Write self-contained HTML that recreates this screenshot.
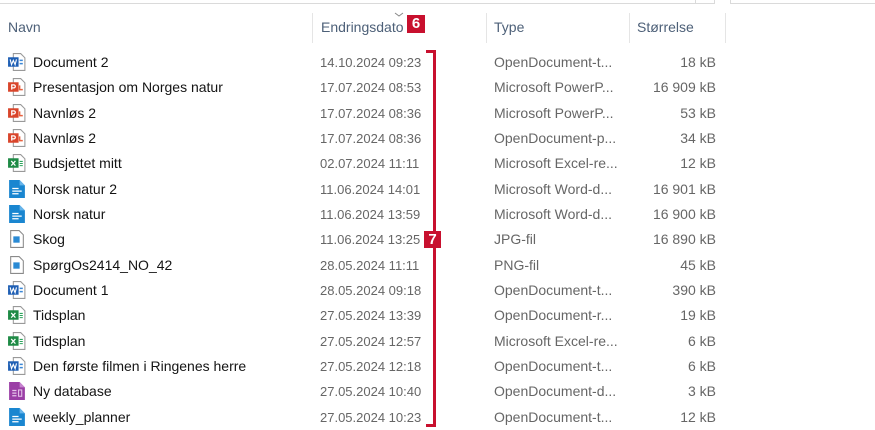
<!DOCTYPE html>
<html><head><meta charset="utf-8"><style>
*{margin:0;padding:0;box-sizing:border-box}
body{width:875px;height:428px;background:#fff;position:relative;overflow:hidden;font-family:"Liberation Sans",sans-serif;font-size:14px}
.a{position:absolute}
.hd{color:#4d6078;top:19px;font-size:14px}
.sep{position:absolute;top:13px;width:1px;height:30px;background:#e5e5e5}
.row{position:absolute;left:0;width:730px;height:25px}
.row span{position:absolute;top:4px;white-space:nowrap}
.n{left:33px;color:#141414}
.d{left:320px;color:#666;font-size:13px;top:5px!important}
.t{left:494px;color:#666}
.s{right:14px;color:#666}
.row svg{position:absolute;left:8px;top:2px}
.bd{position:absolute;background:#c8102e;color:#fff;font-weight:bold;font-size:15px;text-align:center;line-height:18px}
</style></head><body>
<div class="a" style="left:0;top:3px;width:715px;height:1px;background:#dadada"></div>
<div class="a" style="left:695px;top:0;width:1px;height:4px;background:#dadada"></div>
<div class="a" style="left:714px;top:0;width:1px;height:4px;background:#dadada"></div>
<div class="a" style="left:730px;top:0;width:1px;height:4px;background:#dadada"></div>
<div class="a" style="left:730px;top:3px;width:145px;height:1px;background:#dadada"></div>

<div class="a hd" style="left:8px">Navn</div>
<div class="sep" style="left:312px"></div>
<div class="a hd" style="left:321px">Endringsdato</div>
<svg class="a" style="left:394px;top:12px" width="10" height="6"><path d="M1 1 L5 4 L9 1" fill="none" stroke="#888" stroke-width="1"/></svg>
<div class="bd" style="left:407px;top:15px;width:18px;height:18px">6</div>
<div class="sep" style="left:486px"></div>
<div class="a hd" style="left:494px">Type</div>
<div class="sep" style="left:629px"></div>
<div class="a hd" style="left:637px">Størrelse</div>
<div class="sep" style="left:725px"></div>

<div class="a" style="left:426px;top:50px;width:10px;height:3px;background:#c8102e"></div>
<div class="a" style="left:433px;top:50px;width:3px;height:377px;background:#c8102e"></div>
<div class="a" style="left:426px;top:424px;width:10px;height:3px;background:#c8102e"></div>
<div class="bd" style="left:424px;top:231px;width:17px;height:17px">7</div>

<svg width="0" height="0" style="position:absolute">
<defs>
<symbol id="w" viewBox="0 0 17 19"><path d="M5 1.5h7l4 4v12H5z" fill="#fff" stroke="#999"/><rect x="0" y="5" width="10" height="9" fill="#1f5fb4"/><path d="M2 7l1.3 5 1.7-4 1.7 4L8 7" fill="none" stroke="#fff" stroke-width="1.1"/><path d="M11 8h3M11 11h3" stroke="#3b87d6" stroke-width="1.4"/></symbol>
<symbol id="p" viewBox="0 0 17 19"><path d="M5 1.5h7l4 4v12H5z" fill="#fff" stroke="#999"/><rect x="0" y="5" width="10" height="9" fill="#d9452b"/><path d="M3.5 12V7.5h2a1.4 1.4 0 0 1 0 2.8h-2" fill="none" stroke="#fff" stroke-width="1.2"/><path d="M11 8v4h3" fill="none" stroke="#e8613f" stroke-width="1.4"/></symbol>
<symbol id="x" viewBox="0 0 17 19"><path d="M5 1.5h7l4 4v12H5z" fill="#fff" stroke="#999"/><rect x="0" y="5" width="10" height="9" fill="#1e8a45"/><path d="M3 7.5l4 4.5M7 7.5l-4 4.5" stroke="#fff" stroke-width="1.2"/><path d="M11 8h3M11 10h3M11 12h3" stroke="#2aa35a" stroke-width="1"/></symbol>
<symbol id="b" viewBox="0 0 17 19"><path d="M1 1h10l5 5v12H1z" fill="#1a86d0"/><path d="M11 1v5h5" fill="#66b4ea"/><path d="M4 9h6M4 11.5h9M4 14h6" stroke="#fff" stroke-width="1.2"/></symbol>
<symbol id="i" viewBox="0 0 17 19"><path d="M2.5 1.5h8l4 4v12h-12z" fill="#fff" stroke="#8a8a8a"/><rect x="5" y="7" width="6" height="6" fill="#2a8ad4"/></symbol>
<symbol id="d" viewBox="0 0 17 19"><path d="M1 1h10l5 5v12H1z" fill="#9b3fa6"/><path d="M11 1v5h5" fill="#c783cf"/><path d="M4 9h4M4 11.5h4M4 14h4" stroke="#e6c5ea" stroke-width="1.2"/><rect x="10" y="8.5" width="3" height="6" fill="none" stroke="#e6c5ea"/></symbol>
</defs></svg>

<div class="row" style="top:50px"><svg width="18" height="20"><use href="#w"/></svg><span class="n">Document 2</span><span class="d">14.10.2024 09:23</span><span class="t">OpenDocument-t...</span><span class="s">18 kB</span></div>
<div class="row" style="top:75.3px"><svg width="18" height="20"><use href="#p"/></svg><span class="n">Presentasjon om Norges natur</span><span class="d">17.07.2024 08:53</span><span class="t">Microsoft PowerP...</span><span class="s">16 909 kB</span></div>
<div class="row" style="top:100.7px"><svg width="18" height="20"><use href="#p"/></svg><span class="n">Navnløs 2</span><span class="d">17.07.2024 08:36</span><span class="t">Microsoft PowerP...</span><span class="s">53 kB</span></div>
<div class="row" style="top:126px"><svg width="18" height="20"><use href="#p"/></svg><span class="n">Navnløs 2</span><span class="d">17.07.2024 08:36</span><span class="t">OpenDocument-p...</span><span class="s">34 kB</span></div>
<div class="row" style="top:151.3px"><svg width="18" height="20"><use href="#x"/></svg><span class="n">Budsjettet mitt</span><span class="d">02.07.2024 11:11</span><span class="t">Microsoft Excel-re...</span><span class="s">12 kB</span></div>
<div class="row" style="top:176.7px"><svg width="18" height="20"><use href="#b"/></svg><span class="n">Norsk natur 2</span><span class="d">11.06.2024 14:01</span><span class="t">Microsoft Word-d...</span><span class="s">16 901 kB</span></div>
<div class="row" style="top:202px"><svg width="18" height="20"><use href="#b"/></svg><span class="n">Norsk natur</span><span class="d">11.06.2024 13:59</span><span class="t">Microsoft Word-d...</span><span class="s">16 900 kB</span></div>
<div class="row" style="top:227.3px"><svg width="18" height="20"><use href="#i"/></svg><span class="n">Skog</span><span class="d">11.06.2024 13:25</span><span class="t">JPG-fil</span><span class="s">16 890 kB</span></div>
<div class="row" style="top:252.7px"><svg width="18" height="20"><use href="#i"/></svg><span class="n">SpørgOs2414_NO_42</span><span class="d">28.05.2024 11:11</span><span class="t">PNG-fil</span><span class="s">45 kB</span></div>
<div class="row" style="top:278px"><svg width="18" height="20"><use href="#w"/></svg><span class="n">Document 1</span><span class="d">28.05.2024 09:18</span><span class="t">OpenDocument-t...</span><span class="s">390 kB</span></div>
<div class="row" style="top:303.3px"><svg width="18" height="20"><use href="#x"/></svg><span class="n">Tidsplan</span><span class="d">27.05.2024 13:39</span><span class="t">OpenDocument-r...</span><span class="s">19 kB</span></div>
<div class="row" style="top:328.7px"><svg width="18" height="20"><use href="#x"/></svg><span class="n">Tidsplan</span><span class="d">27.05.2024 12:57</span><span class="t">Microsoft Excel-re...</span><span class="s">6 kB</span></div>
<div class="row" style="top:354px"><svg width="18" height="20"><use href="#w"/></svg><span class="n">Den første filmen i Ringenes herre</span><span class="d">27.05.2024 12:18</span><span class="t">OpenDocument-t...</span><span class="s">6 kB</span></div>
<div class="row" style="top:379.3px"><svg width="18" height="20"><use href="#d"/></svg><span class="n">Ny database</span><span class="d">27.05.2024 10:40</span><span class="t">OpenDocument-d...</span><span class="s">3 kB</span></div>
<div class="row" style="top:404.7px"><svg width="18" height="20"><use href="#b"/></svg><span class="n">weekly_planner</span><span class="d">27.05.2024 10:23</span><span class="t">OpenDocument-t...</span><span class="s">12 kB</span></div>
</body></html>
